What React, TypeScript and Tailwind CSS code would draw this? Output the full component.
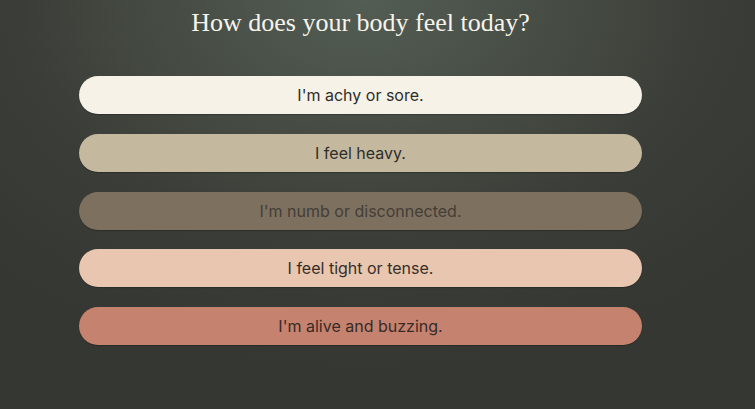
const options = [
  { label: "I'm achy or sore.", cls: "bg-[#f6f2e7] text-[#2f2d29]" },
  { label: "I feel heavy.", cls: "bg-[#c4b99f] text-[#2f2d29]" },
  { label: "I'm numb or disconnected.", cls: "bg-[#7e705e] text-[#433e38]" },
  { label: "I feel tight or tense.", cls: "bg-[#e9c6af] text-[#352e29]" },
  { label: "I'm alive and buzzing.", cls: "bg-[#c5826f] text-[#372b26]" },
];

export default function App() {
  return (
    <div className="min-h-[409px] w-full bg-[#383b35] bg-[radial-gradient(ellipse_70%_90%_at_48%_0%,#535d54_0%,#474d45_35%,#3b3e38_65%,#353832_100%)] font-['Inter',sans-serif]">
      <div className="ml-[79px] w-[563px] pt-[7px]">
        <h1 className="text-center font-['Liberation_Serif',serif] text-[26px] leading-[32px] text-[#f7f4ec]">
          How does your body feel today?
        </h1>
        <div className="mt-[37px] flex flex-col gap-[19.75px]">
          {options.map((o) => (
            <button
              key={o.label}
              className={`h-[38px] w-full rounded-full text-[16px] shadow-[0_1px_1px_rgba(0,0,0,0.25)] ${o.cls}`}
            >
              {o.label}
            </button>
          ))}
        </div>
      </div>
    </div>
  );
}
